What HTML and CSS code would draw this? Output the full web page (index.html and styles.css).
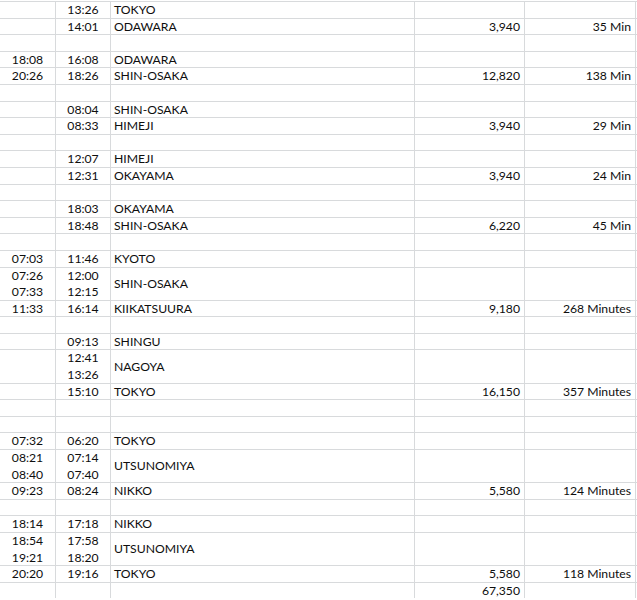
FILE: index.html
```html
<!DOCTYPE html>
<html>
<head>
<meta charset="utf-8">
<link rel="stylesheet" href="styles.css">
</head>
<body>
<div class="sheet">
  <div class="row"><div class="c t"></div><div class="c t">13:26</div><div class="c s">TOKYO</div><div class="c n"></div><div class="c m"></div></div>
  <div class="row"><div class="c t"></div><div class="c t">14:01</div><div class="c s">ODAWARA</div><div class="c n">3,940</div><div class="c m">35 Min</div></div>
  <div class="row"><div class="c t"></div><div class="c t"></div><div class="c s"></div><div class="c n"></div><div class="c m"></div></div>
  <div class="row"><div class="c t">18:08</div><div class="c t">16:08</div><div class="c s">ODAWARA</div><div class="c n"></div><div class="c m"></div></div>
  <div class="row"><div class="c t">20:26</div><div class="c t">18:26</div><div class="c s">SHIN-OSAKA</div><div class="c n">12,820</div><div class="c m">138 Min</div></div>
  <div class="row"><div class="c t"></div><div class="c t"></div><div class="c s"></div><div class="c n"></div><div class="c m"></div></div>
  <div class="row"><div class="c t"></div><div class="c t">08:04</div><div class="c s">SHIN-OSAKA</div><div class="c n"></div><div class="c m"></div></div>
  <div class="row"><div class="c t"></div><div class="c t">08:33</div><div class="c s">HIMEJI</div><div class="c n">3,940</div><div class="c m">29 Min</div></div>
  <div class="row"><div class="c t"></div><div class="c t"></div><div class="c s"></div><div class="c n"></div><div class="c m"></div></div>
  <div class="row"><div class="c t"></div><div class="c t">12:07</div><div class="c s">HIMEJI</div><div class="c n"></div><div class="c m"></div></div>
  <div class="row"><div class="c t"></div><div class="c t">12:31</div><div class="c s">OKAYAMA</div><div class="c n">3,940</div><div class="c m">24 Min</div></div>
  <div class="row"><div class="c t"></div><div class="c t"></div><div class="c s"></div><div class="c n"></div><div class="c m"></div></div>
  <div class="row"><div class="c t"></div><div class="c t">18:03</div><div class="c s">OKAYAMA</div><div class="c n"></div><div class="c m"></div></div>
  <div class="row"><div class="c t"></div><div class="c t">18:48</div><div class="c s">SHIN-OSAKA</div><div class="c n">6,220</div><div class="c m">45 Min</div></div>
  <div class="row"><div class="c t"></div><div class="c t"></div><div class="c s"></div><div class="c n"></div><div class="c m"></div></div>
  <div class="row"><div class="c t">07:03</div><div class="c t">11:46</div><div class="c s">KYOTO</div><div class="c n"></div><div class="c m"></div></div>
  <div class="row dbl"><div class="c t">07:26<br>07:33</div><div class="c t">12:00<br>12:15</div><div class="c s">SHIN-OSAKA</div><div class="c n"></div><div class="c m"></div></div>
  <div class="row"><div class="c t">11:33</div><div class="c t">16:14</div><div class="c s">KIIKATSUURA</div><div class="c n">9,180</div><div class="c m">268 Minutes</div></div>
  <div class="row"><div class="c t"></div><div class="c t"></div><div class="c s"></div><div class="c n"></div><div class="c m"></div></div>
  <div class="row"><div class="c t"></div><div class="c t">09:13</div><div class="c s">SHINGU</div><div class="c n"></div><div class="c m"></div></div>
  <div class="row dbl"><div class="c t"></div><div class="c t">12:41<br>13:26</div><div class="c s">NAGOYA</div><div class="c n"></div><div class="c m"></div></div>
  <div class="row"><div class="c t"></div><div class="c t">15:10</div><div class="c s">TOKYO</div><div class="c n">16,150</div><div class="c m">357 Minutes</div></div>
  <div class="row"><div class="c t"></div><div class="c t"></div><div class="c s"></div><div class="c n"></div><div class="c m"></div></div>
  <div class="row"><div class="c t"></div><div class="c t"></div><div class="c s"></div><div class="c n"></div><div class="c m"></div></div>
  <div class="row"><div class="c t">07:32</div><div class="c t">06:20</div><div class="c s">TOKYO</div><div class="c n"></div><div class="c m"></div></div>
  <div class="row dbl"><div class="c t">08:21<br>08:40</div><div class="c t">07:14<br>07:40</div><div class="c s">UTSUNOMIYA</div><div class="c n"></div><div class="c m"></div></div>
  <div class="row"><div class="c t">09:23</div><div class="c t">08:24</div><div class="c s">NIKKO</div><div class="c n">5,580</div><div class="c m">124 Minutes</div></div>
  <div class="row"><div class="c t"></div><div class="c t"></div><div class="c s"></div><div class="c n"></div><div class="c m"></div></div>
  <div class="row"><div class="c t">18:14</div><div class="c t">17:18</div><div class="c s">NIKKO</div><div class="c n"></div><div class="c m"></div></div>
  <div class="row dbl"><div class="c t">18:54<br>19:21</div><div class="c t">17:58<br>18:20</div><div class="c s">UTSUNOMIYA</div><div class="c n"></div><div class="c m"></div></div>
  <div class="row"><div class="c t">20:20</div><div class="c t">19:16</div><div class="c s">TOKYO</div><div class="c n">5,580</div><div class="c m">118 Minutes</div></div>
  <div class="row"><div class="c t"></div><div class="c t"></div><div class="c s"></div><div class="c n">67,350</div><div class="c m"></div></div>
</div>
</body>
</html>
```
FILE: styles.css
```css
html, body {
  margin: 0;
  padding: 0;
  background: #ffffff;
}
.sheet {
  padding-top: 1px;
  font-family: Lato, "Open Sans", sans-serif;
  font-size: 12.2px;
  color: #0e0e0e;
}
.row {
  display: grid;
  grid-template-columns: 56px 55px 304px 110px 111px;
  height: 16.6px;
  box-sizing: border-box;
  border-top: 1px solid #d8dadc;
}
.row.dbl {
  height: 33.2px;
}
.c {
  box-sizing: border-box;
  border-right: 1px solid #d8dadc;
  display: flex;
  align-items: center;
  line-height: 16.6px;
  white-space: nowrap;
}
.t {
  justify-content: center;
  text-align: center;
}
.s {
  padding-left: 3px;
}
.n {
  justify-content: flex-end;
  padding-right: 4px;
}
.m {
  justify-content: flex-end;
  padding-right: 4px;
}
```
